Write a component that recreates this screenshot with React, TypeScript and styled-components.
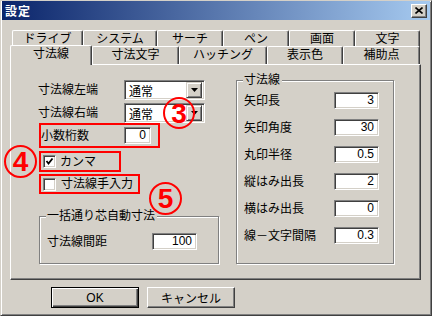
import styled, { createGlobalStyle } from "styled-components";

const GlobalStyle = createGlobalStyle`
  body {
    margin: 0;
    background: #d4d0c8;
  }
`;

const FONT = `"Liberation Sans", "Noto Sans CJK JP", sans-serif`;

// Outer dialog frame
const Window = styled.div`
  position: relative;
  width: 432px;
  height: 316px;
  box-sizing: border-box;
  background: #d4d0c8;
  border: 1px solid;
  border-color: #d4d0c8 #404040 #404040 #d4d0c8;
  box-shadow: inset 1px 1px #fff, inset -1px -1px #808080;
  padding: 0 1px 1px 1px;
  font-family: ${FONT};
  font-size: 12px;
  color: #000;
`;

const TitleBar = styled.div`
  height: 19px;
  display: flex;
  align-items: center;
  justify-content: space-between;
  padding: 0 3px 0 3px;
  background: linear-gradient(to right, #0a246a, #a6caf0);
`;

const TitleText = styled.span`
  color: #fff;
  font-weight: bold;
  font-size: 12px;
  letter-spacing: 1px;
`;

const CloseButton = styled.div`
  width: 16px;
  height: 14px;
  box-sizing: border-box;
  display: flex;
  align-items: center;
  justify-content: center;
  background: #d4d0c8;
  border: 1px solid;
  border-color: #fff #404040 #404040 #fff;
  box-shadow: inset -1px -1px #808080;
`;

// Tabs
const TabArea = styled.div`
  margin-top: 10px;
  padding-left: 10px;
`;

const TabRow = styled.div<{ $front?: boolean }>`
  display: flex;
  align-items: flex-end;
  height: ${(p) => (p.$front ? 16 : 18)}px;
  position: relative;
  z-index: ${(p) => (p.$front ? 2 : 1)};
`;

const Tab = styled.div<{ $w: number; $active?: boolean }>`
  width: ${(p) => p.$w}px;
  height: ${(p) => (p.$active ? 20 : 18)}px;
  box-sizing: border-box;
  flex-shrink: 0;
  background: #d4d0c8;
  border-top: 1px solid #fff;
  border-left: 1px solid #fff;
  border-right: 1px solid #404040;
  border-radius: 2px 2px 0 0;
  box-shadow: inset -1px 0 #808080;
  text-align: center;
  line-height: 15px;
  padding-top: 1px;
  margin-left: ${(p) => (p.$active ? -2 : 0)}px;
  margin-bottom: ${(p) => (p.$active ? -1 : 0)}px;
  position: relative;
  z-index: ${(p) => (p.$active ? 3 : 1)};
`;

const Panel = styled.div`
  margin-left: 8px;
  width: 411px;
  height: 216px;
  box-sizing: border-box;
  border: 1px solid;
  border-color: #fff #404040 #404040 #fff;
  box-shadow: inset -1px -1px #808080;
  padding: 15px 0 0 27px;
  display: flex;
  gap: 18px;
  align-items: flex-start;
`;

const LeftColumn = styled.div`
  width: 180px;
  display: flex;
  flex-direction: column;
`;

const Row = styled.div<{ $mt?: number }>`
  display: flex;
  align-items: center;
  height: 20px;
  margin-top: ${(p) => p.$mt ?? 0}px;
`;

// rows outlined in red in the screenshot
const MarkedRow = styled.div<{ $w: number; $h: number; $mt?: number }>`
  display: flex;
  align-items: center;
  width: ${(p) => p.$w}px;
  height: ${(p) => p.$h}px;
  margin-top: ${(p) => p.$mt ?? 0}px;
  margin-left: 1px;
  box-sizing: border-box;
  border: 2px solid #ff0000;
`;

const Label = styled.span<{ $w?: number; $ml?: number }>`
  width: ${(p) => (p.$w ? `${p.$w}px` : "auto")};
  margin-left: ${(p) => p.$ml ?? 0}px;
  flex-shrink: 0;
  white-space: nowrap;
  line-height: 14px;
`;

const Select = styled.div`
  width: 81px;
  height: 20px;
  box-sizing: border-box;
  display: flex;
  align-items: center;
  justify-content: space-between;
  background: #fff;
  border: 1px solid;
  border-color: #808080 #fff #fff #808080;
  box-shadow: inset 1px 1px #404040, inset -1px -1px #d4d0c8;
  padding: 2px 2px 2px 4px;
`;

const DropButton = styled.div`
  width: 16px;
  height: 16px;
  box-sizing: border-box;
  display: flex;
  align-items: center;
  justify-content: center;
  background: #d4d0c8;
  border: 1px solid;
  border-color: #d4d0c8 #404040 #404040 #d4d0c8;
  box-shadow: inset 1px 1px #fff, inset -1px -1px #808080;
`;

const Field = styled.div<{ $w: number }>`
  width: ${(p) => p.$w}px;
  height: 17px;
  box-sizing: border-box;
  flex-shrink: 0;
  background: #fff;
  border: 1px solid;
  border-color: #808080 #fff #fff #808080;
  box-shadow: inset 1px 1px #404040, inset -1px -1px #d4d0c8;
  text-align: right;
  padding-right: 4px;
  line-height: 15px;
  font-size: 12px;
`;

const CheckBox = styled.div<{ $ml?: number }>`
  width: 13px;
  height: 13px;
  box-sizing: border-box;
  flex-shrink: 0;
  margin-left: ${(p) => p.$ml ?? 0}px;
  background: #fff;
  border: 1px solid;
  border-color: #808080 #fff #fff #808080;
  box-shadow: inset 1px 1px #404040, inset -1px -1px #d4d0c8;
  display: flex;
  align-items: center;
  justify-content: center;
`;

const GroupBox = styled.div<{ $w: number; $h: number; $mt?: number; $ml?: number }>`
  position: relative;
  width: ${(p) => p.$w}px;
  height: ${(p) => p.$h}px;
  margin-top: ${(p) => p.$mt ?? 0}px;
  margin-left: ${(p) => p.$ml ?? 0}px;
  box-sizing: border-box;
  border: 1px solid #808080;
  box-shadow: inset 1px 1px #fff, 1px 1px #fff;
  display: flex;
  flex-direction: column;
`;

const Legend = styled.span`
  position: absolute;
  top: -8px;
  left: 6px;
  padding: 0 2px 0 1px;
  background: #d4d0c8;
  line-height: 14px;
  white-space: nowrap;
`;

const GroupRows = styled.div<{ $pt: number; $gap: number }>`
  display: flex;
  flex-direction: column;
  gap: ${(p) => p.$gap}px;
  padding: ${(p) => p.$pt}px 0 0 7px;
`;

const FieldRow = styled.div`
  display: flex;
  align-items: center;
  height: 17px;
`;

const ButtonBar = styled.div`
  display: flex;
  gap: 8px;
  margin: 7px 0 0 49px;
`;

const Button = styled.div<{ $default?: boolean }>`
  width: 88px;
  height: 21px;
  box-sizing: border-box;
  display: flex;
  align-items: center;
  justify-content: center;
  background: #d4d0c8;
  border: 1px solid;
  border-color: ${(p) => (p.$default ? "#000" : "#fff #404040 #404040 #fff")};
  box-shadow: ${(p) =>
    p.$default
      ? "inset 1px 1px #fff, inset -1px -1px #404040, inset -2px -2px #808080"
      : "inset -1px -1px #808080"};
`;

// red circled numbers drawn over the dialog
const Badge = styled.div<{ $x: number; $y: number; $s: number }>`
  position: absolute;
  left: ${(p) => p.$x}px;
  top: ${(p) => p.$y}px;
  width: ${(p) => p.$s}px;
  height: ${(p) => p.$s}px;
  box-sizing: border-box;
  border: 2px solid #ff0000;
  border-radius: 50%;
  display: flex;
  align-items: center;
  justify-content: center;
  color: #ff0000;
  font-family: "Liberation Sans", sans-serif;
  font-weight: bold;
  font-size: 28px;
  line-height: 1;
  padding-top: 1px;
`;

const Arrow = () => (
  <svg width="7" height="4" viewBox="0 0 7 4">
    <path d="M0 0h7L3.5 4z" fill="#000" />
  </svg>
);

const Check = () => (
  <svg width="9" height="9" viewBox="0 0 9 9">
    <polyline points="1.5,4 3.5,6.5 7.5,1.5" fill="none" stroke="#000" strokeWidth="1.8" />
  </svg>
);

const backTabs: [string, number][] = [
  ["ドライブ", 71],
  ["システム", 74],
  ["サーチ", 66],
  ["ペン", 66],
  ["画面", 66],
  ["文字", 65],
];

const frontTabs: [string, number][] = [
  ["寸法線", 82],
  ["寸法文字", 87],
  ["ハッチング", 88],
  ["表示色", 76],
  ["補助点", 77],
];

const arrowRows: [string, string][] = [
  ["矢印長", "3"],
  ["矢印角度", "30"],
  ["丸印半径", "0.5"],
  ["縦はみ出長", "2"],
  ["横はみ出長", "0"],
  ["線－文字間隔", "0.3"],
];

export default function App() {
  return (
    <>
      <GlobalStyle />
      <Window>
        <TitleBar>
          <TitleText>設定</TitleText>
          <CloseButton>
            <svg width="8" height="7" viewBox="0 0 8 7">
              <path d="M0.5 0.5L7.5 6.5M7.5 0.5L0.5 6.5" stroke="#000" strokeWidth="1.6" />
            </svg>
          </CloseButton>
        </TitleBar>

        <TabArea>
          <TabRow>
            {backTabs.map(([t, w]) => (
              <Tab key={t} $w={w}>
                {t}
              </Tab>
            ))}
          </TabRow>
          <TabRow $front>
            {frontTabs.map(([t, w], i) => (
              <Tab key={t} $w={w} $active={i === 0}>
                {t}
              </Tab>
            ))}
          </TabRow>
        </TabArea>

        <Panel>
          <LeftColumn>
            <Row>
              <Label $w={86}>寸法線左端</Label>
              <Select>
                <span>通常</span>
                <DropButton>
                  <Arrow />
                </DropButton>
              </Select>
            </Row>
            <Row $mt={3}>
              <Label $w={86}>寸法線右端</Label>
              <Select>
                <span>通常</span>
                <DropButton>
                  <Arrow />
                </DropButton>
              </Select>
            </Row>
            <MarkedRow $w={121} $h={25}>
              <Label $w={83}>小数桁数</Label>
              <Field $w={27}>0</Field>
            </MarkedRow>
            <MarkedRow $w={82} $h={21} $mt={3}>
              <CheckBox $ml={2}>
                <Check />
              </CheckBox>
              <Label $ml={4}>カンマ</Label>
            </MarkedRow>
            <MarkedRow $w={101} $h={20} $mt={2}>
              <CheckBox $ml={2} />
              <Label $ml={5}>寸法線手入力</Label>
            </MarkedRow>
            <GroupBox $w={180} $h={48} $mt={22} $ml={1}>
              <Legend>一括通り芯自動寸法</Legend>
              <GroupRows $pt={16} $gap={0}>
                <FieldRow>
                  <Label $w={105}>寸法線間距</Label>
                  <Field $w={45}>100</Field>
                </FieldRow>
              </GroupRows>
            </GroupBox>
          </LeftColumn>

          <GroupBox $w={158} $h={184}>
            <Legend>寸法線</Legend>
            <GroupRows $pt={11} $gap={10}>
              {arrowRows.map(([l, v]) => (
                <FieldRow key={l}>
                  <Label $w={90}>{l}</Label>
                  <Field $w={45}>{v}</Field>
                </FieldRow>
              ))}
            </GroupRows>
          </GroupBox>
        </Panel>

        <ButtonBar>
          <Button $default>OK</Button>
          <Button>キャンセル</Button>
        </ButtonBar>

        <Badge $x={162} $y={96} $s={32}>3</Badge>
        <Badge $x={3} $y={144} $s={33}>4</Badge>
        <Badge $x={148} $y={181} $s={33}>5</Badge>
      </Window>
    </>
  );
}
